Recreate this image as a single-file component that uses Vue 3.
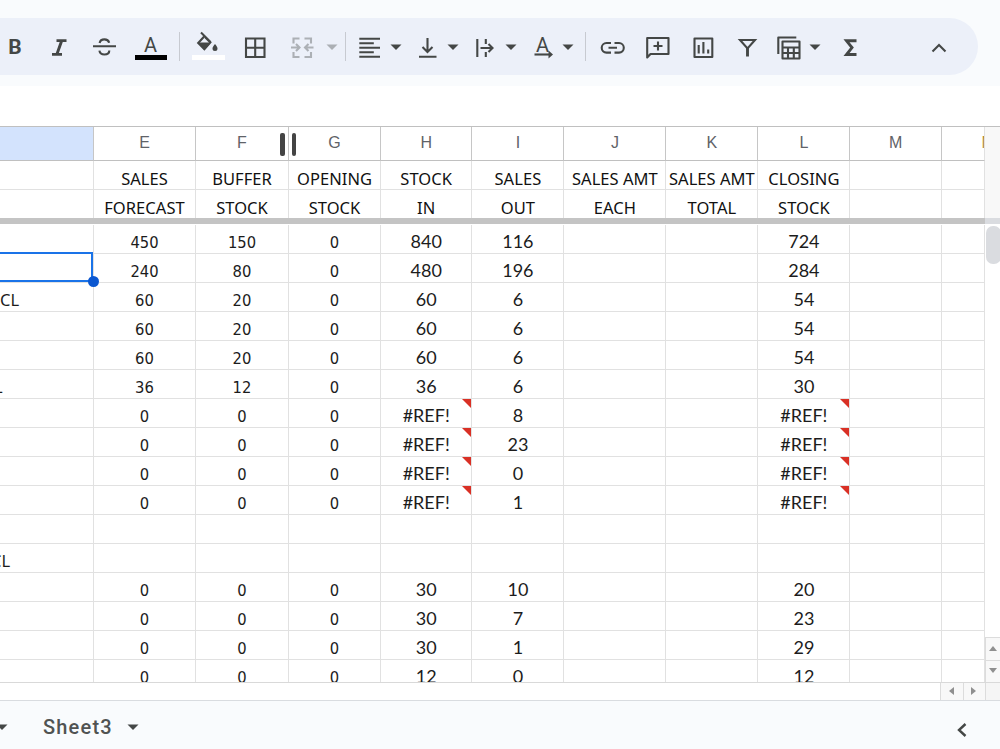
<script setup>
// Column headers, left to right
const columns = ["", "E", "F", "G", "H", "I", "J", "K", "L", "M", "N"];

const frozen = [
  ["", "SALES", "BUFFER", "OPENING", "STOCK", "SALES", "SALES AMT", "SALES AMT", "CLOSING", "", ""],
  ["", "FORECAST", "STOCK", "STOCK", "IN", "OUT", "EACH", "TOTAL", "STOCK", "", ""],
];

const rows = [
  ["", "450", "150", "0", "840", "116", "", "", "724", "", ""],
  ["", "240", "80", "0", "480", "196", "", "", "284", "", ""],
  ["CL", "60", "20", "0", "60", "6", "", "", "54", "", ""],
  ["", "60", "20", "0", "60", "6", "", "", "54", "", ""],
  ["", "60", "20", "0", "60", "6", "", "", "54", "", ""],
  ["L", "36", "12", "0", "36", "6", "", "", "30", "", ""],
  ["", "0", "0", "0", "#REF!", "8", "", "", "#REF!", "", ""],
  ["", "0", "0", "0", "#REF!", "23", "", "", "#REF!", "", ""],
  ["", "0", "0", "0", "#REF!", "0", "", "", "#REF!", "", ""],
  ["", "0", "0", "0", "#REF!", "1", "", "", "#REF!", "", ""],
  ["", "", "", "", "", "", "", "", "", "", ""],
  ["CL", "", "", "", "", "", "", "", "", "", ""],
  ["", "0", "0", "0", "30", "10", "", "", "20", "", ""],
  ["", "0", "0", "0", "30", "7", "", "", "23", "", ""],
  ["", "0", "0", "0", "30", "1", "", "", "29", "", ""],
  ["", "0", "0", "0", "12", "0", "", "", "12", "", ""],
];

function cellClass(value, row, col) {
  return {
    label: col === 0,
    cut: col === 0 && row === 5,
    half: col === 0 && row === 11,
    large: col > 3,
    error: value === "#REF!",
    selected: row === 1 && col === 0,
  };
}
</script>

<template>
  <div class="app">
    <header class="top">
      <div class="toolbar">
        <svg class="icon" viewBox="0 0 32 32"><text class="bold" x="16" y="23.3">B</text></svg>
        <svg class="icon" viewBox="0 0 32 32"><path class="thick" d="M13.5 9.6h10M9 23.4h10M18.6 10l-4.6 13" /></svg>
        <svg class="icon" viewBox="0 0 32 32">
          <path d="M5 15.2h23M11.6 12c.5-2.4 2.4-3.6 4.8-3.6s4.2 1.2 4.8 3.3M11.4 19.6c.4 2.6 2.3 3.9 5 3.9s4.9-1.4 4.9-4" />
        </svg>
        <svg class="icon" viewBox="0 0 32 32"><text class="letter" x="15.5" y="20.5">A</text><path class="solid black" d="M0 24h32v5H0z" /></svg>
        <i class="divider"></i>
        <svg class="icon" viewBox="0 0 32 32">
          <path d="M9 1.5l9.5 9.5M12.2 5.500l-6 6.500 6.200 6.200 6-6.800-5-5" />
          <path class="solid" d="M6 11.500h13l-6.800 7.500zM23 13c1.500 2 2.500 3 2.500 4.500a2.500 2.500 0 0 1-5 0c0-1.500 1-2.500 2.500-4.500z" />
          <path class="solid white" d="M0 24h33v5H0z" />
        </svg>
        <svg class="icon" viewBox="0 0 32 32"><path d="M7 7.500h18.500v18.500H7zM16.200 7.500v18.500M7 16.800h18.500" /></svg>
        <svg class="icon faded" viewBox="0 0 32 32">
          <path d="M13.500 7.500H7.500v5M18.500 7.500h6.500v5M13.500 26H7.500v-5M18.500 26h6.500v-5M5 16.500h8M27.500 16.500h-8M10 13l3.500 3.500-3.500 3.500M22.500 13l-3.500 3.500 3.500 3.500" />
        </svg>
        <svg class="arrow faded" viewBox="0 0 12 32"><path d="M.5 13.500h11L6 19z" /></svg>
        <i class="divider"></i>
        <svg class="icon" viewBox="0 0 32 32"><path d="M5.300 7.800h20.700M5.300 12.200h14.500M5.300 16.700h20.700M5.300 21.200h14.500M5.300 25.700h20.700" /></svg>
        <svg class="arrow" viewBox="0 0 12 32"><path d="M.5 13.500h11L6 19z" /></svg>
        <svg class="icon" viewBox="0 0 32 32"><path d="M15.500 7v14M10.500 16l5 5 5-5M7 25.700h17.500" /></svg>
        <svg class="arrow" viewBox="0 0 12 32"><path d="M.5 13.500h11L6 19z" /></svg>
        <svg class="icon" viewBox="0 0 32 32"><path d="M9.300 8v18M17.800 8v5M17.800 21v5M12.500 17h12M20.500 13l4 4-4 4" /></svg>
        <svg class="arrow" viewBox="0 0 12 32"><path d="M.5 13.500h11L6 19z" /></svg>
        <svg class="icon" viewBox="0 0 32 32"><text class="letter" x="15.500" y="20.500">A</text><path d="M7.500 23.500h16" /><path class="solid" d="M21.500 19.500l4.500 4-4.500 4z" /></svg>
        <svg class="arrow" viewBox="0 0 12 32"><path d="M.5 13.500h11L6 19z" /></svg>
        <i class="divider"></i>
        <svg class="icon" viewBox="0 0 32 32"><path d="M14 12H9.500a4.800 4.800 0 0 0 0 9.600h4.500M17.500 12h4.500a4.800 4.800 0 0 1 0 9.600H17.500M11.500 16.800h8.500" /></svg>
        <svg class="icon" viewBox="0 0 32 32"><path stroke-linejoin="round" d="M5.200 26.500V7h21.300v16H8.500zM16 10.500v9M11.500 15h9" /></svg>
        <svg class="icon" viewBox="0 0 32 32"><path stroke-linejoin="round" d="M7.500 7.500h17.800v18.500H7.500zM11.700 14v8.500M16.400 11v11.500M21.200 18.500v4" /></svg>
        <svg class="icon" viewBox="0 0 32 32"><path d="M9 9h15l-7.500 8.500z" /><path class="thick" d="M16.500 16.500v9" /></svg>
        <svg class="icon" viewBox="0 0 32 32"><path stroke-linejoin="round" d="M5.300 23V6.500h18M9.500 10.500h17v17h-17zM9.500 16.500h17M9.500 22h17M15 16.500v11M20.800 16.500v11" /></svg>
        <svg class="arrow" viewBox="0 0 12 32"><path d="M.5 13.500h11L6 19z" /></svg>
        <svg class="icon" viewBox="0 0 32 32"><path class="thick" d="M22.500 9.800H12.500l5.500 6.800-5.500 6.900h10" /></svg>
        <svg class="icon" viewBox="0 0 32 32"><path d="M9.500 20.500l6.500-6.500 6.500 6.500" /></svg>
      </div>
    </header>

    <main class="sheet">
      <div class="grid">
        <div class="row heads">
          <div v-for="(name, c) in columns" :key="c" class="head" :class="{ active: c === 0 }">
            <span>{{ name }}</span>
            <div v-if="name === 'F'" class="handle"><i></i><i></i></div>
          </div>
        </div>
        <div v-for="(row, r) in frozen" :key="'f' + r" class="row frozen">
          <div v-for="(value, c) in row" :key="c" class="cell">{{ value }}</div>
        </div>
        <div class="freeze"></div>
        <div class="body">
          <div v-for="(row, r) in rows" :key="r" class="row">
            <div v-for="(value, c) in row" :key="c" class="cell" :class="cellClass(value, r, c)">
              <span>{{ value }}</span>
            </div>
          </div>
        </div>
      </div>
      <aside class="vscroll">
        <div class="vtop"></div>
        <div class="vbar"></div>
        <div class="track"><div class="thumb"></div></div>
        <div class="step"><svg viewBox="0 0 8 5"><path d="M0 5h8L4 0z" /></svg></div>
        <div class="step"><svg viewBox="0 0 8 5"><path d="M0 0h8L4 5z" /></svg></div>
      </aside>
    </main>

    <div class="hscroll">
      <div class="hstep"><svg viewBox="0 0 5 8"><path d="M5 0v8L0 4z" /></svg></div>
      <div class="hstep"><svg viewBox="0 0 5 8"><path d="M0 0v8l5-4z" /></svg></div>
      <div class="corner"></div>
    </div>

    <footer class="tabs">
      <svg class="arrow first" viewBox="0 0 12 32"><path d="M.5 13.500h11L6 19z" /></svg>
      <span class="tab">Sheet3</span>
      <svg class="arrow" viewBox="0 0 12 32"><path d="M.5 13.500h11L6 19z" /></svg>
      <svg class="collapse" viewBox="0 0 12 16"><path d="M9.500 2L3 8l6.500 6" /></svg>
    </footer>
  </div>
</template>

<style>
body {
  margin: 0;
  overflow: hidden;
}
</style>

<style scoped>
.app {
  width: 1000px;
  height: 749px;
  display: flex;
  flex-direction: column;
  background: #fff;
  overflow: hidden;
}

.top {
  box-sizing: border-box;
  height: 86px;
  padding-top: 18px;
  margin-bottom: 40px;
  background: #f9fbfd;
}

.toolbar {
  box-sizing: border-box;
  width: 978px;
  height: 57px;
  padding-top: 13px;
  border-radius: 0 29px 29px 0;
  background: #ecf0f9;
  display: grid;
  grid-template-columns:
    44px 45px 47px 44px 13px 47px 47px 40px 19px 9px 36px 22px 35px 21px
    37px 22px 35px 23px 12px 45px 45px 44px 42px 36px 25px 89px 32px;
}

.icon {
  width: 32px;
  height: 32px;
  margin-left: -1px;
  fill: none;
  stroke: #444746;
  stroke-width: 2.1;
  overflow: visible;
}

.icon .thick {
  stroke-width: 2.9;
}

.icon text {
  fill: #444746;
  stroke: none;
  text-anchor: middle;
  font-family: Roboto, sans-serif;
}

.icon .bold {
  font-size: 21px;
  font-weight: 700;
}

.icon .letter {
  font-size: 20px;
  font-weight: 400;
}

.icon .solid {
  fill: #444746;
  stroke: none;
}

.icon .black {
  fill: #000;
}

.icon .white {
  fill: #fff;
}

.arrow {
  width: 12px;
  height: 32px;
  margin-left: -1px;
  fill: #444746;
}

.faded {
  opacity: 0.38;
}

.divider {
  width: 1px;
  height: 29px;
  margin-left: -1px;
  margin-top: 1px;
  background: #c7cad1;
}

.sheet {
  height: 556px;
  display: flex;
}

.grid {
  width: 985px;
  height: 556px;
  display: flex;
  flex-direction: column;
  border-top: 1px solid #c0c0c0;
  box-sizing: border-box;
}

.row {
  flex: none;
  display: grid;
  grid-template-columns: 94px 102px 93px 92px 91.4px 92px 102px 92px 92px 91.6px 1fr;
  grid-template-rows: 100%;
  height: 28.97px;
}

.heads {
  height: 34px;
}

.head {
  position: relative;
  box-sizing: border-box;
  border-right: 1px solid #c6c6c6;
  border-bottom: 1px solid #c0c0c0;
  font: 16px/32px "Liberation Sans", Arial, sans-serif;
  color: #5f6368;
  text-align: center;
  overflow: hidden;
}

.head:last-child {
  text-align: right;
  color: #b08b3c;
  border-right-color: #e1e1e1;
}

.head:last-child span {
  margin-right: -9px;
}

.head:nth-child(3) {
  overflow: visible;
}

.head.active {
  background: #d3e3fd;
}

/* drag marker between F and G */
.handle {
  position: absolute;
  z-index: 1;
  left: 83.5px;
  top: 6px;
  height: 23px;
  display: flex;
  gap: 7px;
}

.handle i {
  width: 5px;
  border-radius: 2px;
  background: #444;
}

.handle i + i {
  width: 4px;
}

.cell {
  position: relative;
  box-sizing: border-box;
  border-right: 1px solid #e1e1e1;
  border-bottom: 1px solid #e1e1e1;
  font: 16.4px/36px "DejaVu Sans Condensed", "DejaVu Sans", sans-serif;
  color: #1c1c1c;
  text-align: center;
  white-space: nowrap;
}

.frozen .cell {
  font: 16.5px/36px "Noto Sans", sans-serif;
  letter-spacing: 0.05px;
  color: #111;
}

.large {
  font: 18px/33px Lato, sans-serif;
}

.label {
  text-align: left;
  font: 16.5px/34px "Noto Sans", sans-serif;
  overflow: hidden;
}

.cut span {
  margin-left: -6px;
}

.half span {
  margin-left: -9px;
}

.error::after {
  content: "";
  position: absolute;
  right: 0;
  top: 0;
  border-top: 9px solid #d93025;
  border-left: 9px solid transparent;
}

.freeze {
  flex: none;
  height: 6px;
  margin: -0.9px 0 1px;
  background: #c4c4c4;
  z-index: 1;
}

.body {
  flex: 1;
  min-height: 0;
  overflow: hidden;
}

.selected {
  overflow: visible;
}

.selected::before {
  content: "";
  position: absolute;
  inset: -2px 0 0 -4px;
  border: 2px solid #1a73e8;
}

.selected::after {
  content: "";
  position: absolute;
  z-index: 1;
  right: -6px;
  bottom: -5px;
  width: 11px;
  height: 11px;
  border-radius: 50%;
  background: #0b57d0;
}

.vscroll {
  width: 15px;
  display: flex;
  flex-direction: column;
  border-top: 1px solid #c0c0c0;
  box-sizing: border-box;
}

.vtop {
  height: 91px;
  background: #f8f8f8;
}

.vbar {
  height: 6px;
  background: #dadce0;
}

.track {
  flex: 1;
  padding-top: 2px;
}

.thumb {
  width: 15px;
  height: 38px;
  margin-left: 1px;
  border-radius: 7px;
  background: #dadce0;
}

.step {
  box-sizing: border-box;
  height: 22.5px;
  border: 1px solid #dcdcdc;
  border-width: 1px 0 0 1px;
  background: #f8f8f8;
  display: flex;
  align-items: center;
  justify-content: center;
}

.step svg {
  width: 8px;
  height: 5px;
  margin-top: -1px;
  fill: #8f8f8f;
}

.hscroll {
  box-sizing: border-box;
  height: 19px;
  border-top: 1px solid #d9d9d9;
  border-bottom: 1px solid #d9dce0;
  display: flex;
  justify-content: flex-end;
}

.hstep {
  box-sizing: border-box;
  width: 22.5px;
  padding: 0 1px 2px 0;
  border-left: 1px solid #dcdcdc;
  background: #f8f8f8;
  display: flex;
  align-items: center;
  justify-content: center;
}

.hstep svg {
  width: 5px;
  height: 8px;
  fill: #8f8f8f;
}

.corner {
  box-sizing: border-box;
  width: 15px;
  border-left: 1px solid #dcdcdc;
  background: #f5f5f5;
}

.tabs {
  flex: 1;
  display: flex;
  align-items: center;
  background: #f9fbfd;
}

.tabs .arrow {
  margin: 4px 0 0;
}

.tabs .first {
  margin-left: -4px;
}

.tab {
  margin: 3px 14.5px 0 35px;
  font: 500 20px/24px Roboto, sans-serif;
  letter-spacing: 1.2px;
  color: #505352;
}

.collapse {
  width: 12px;
  height: 16px;
  margin: 10px 32px 0 auto;
  fill: none;
  stroke: #444746;
  stroke-width: 2.4;
}
</style>
